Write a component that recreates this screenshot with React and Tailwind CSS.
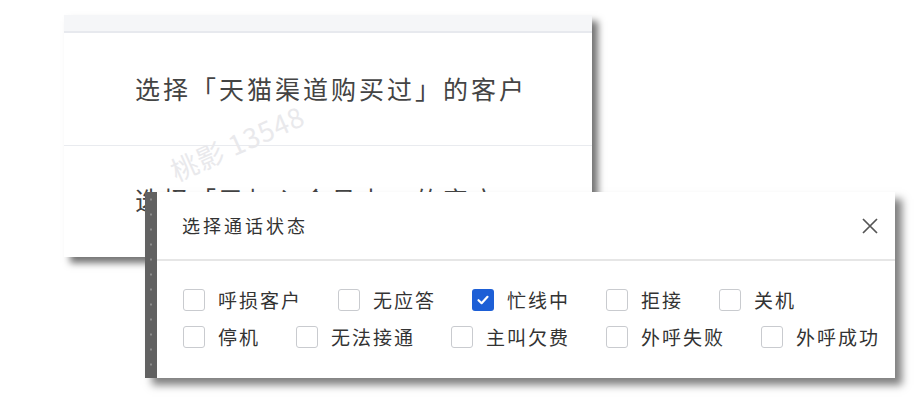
const options = [
  { label: "呼损客户", checked: false },
  { label: "无应答", checked: false },
  { label: "忙线中", checked: true },
  { label: "拒接", checked: false },
  { label: "关机", checked: false },
  { label: "停机", checked: false },
  { label: "无法接通", checked: false },
  { label: "主叫欠费", checked: false },
  { label: "外呼失败", checked: false },
  { label: "外呼成功", checked: false },
];

function Checkbox({ checked }) {
  if (checked) {
    return (
      <span className="w-[22px] h-[22px] rounded-[3px] bg-[#1d5fd6] flex items-center justify-center shrink-0">
        <svg width="14" height="14" viewBox="0 0 14 14" fill="none">
          <polyline points="2.5,7.2 5.6,10.2 11.5,3.8" stroke="#fff" strokeWidth="2.2" strokeLinecap="round" strokeLinejoin="round" />
        </svg>
      </span>
    );
  }
  return <span className="w-[22px] h-[22px] rounded-[3px] border border-[#c9cbcf] bg-white shrink-0" />;
}

export default function App() {
  return (
    <div
      className="relative w-[915px] h-[405px] bg-white overflow-hidden"
      style={{ fontFamily: '"Noto Sans CJK SC", "Noto Sans", sans-serif' }}
    >
      {/* background card */}
      <div className="absolute left-[64px] top-[15px] w-[528px] bg-white shadow-[6px_6px_7px_rgba(0,0,0,0.55)]">
        <div className="h-[18px] bg-[#f5f6f8] border-b-2 border-[#e7e9ee]" />
        <div className="h-[113px] flex items-center pl-[71px] border-b border-[#e9ebef] text-[25px] tracking-[3px] text-[#444]">
          选择「天猫渠道购买过」的客户
        </div>
        <div className="h-[111px] flex items-center pl-[71px] pb-[4px] text-[25px] tracking-[3px] text-[#444]">
          选择「已加入会员卡」的客户
        </div>
      </div>

      {/* watermark */}
      <div className="absolute left-[172px] top-[157px] h-[30px] leading-[30px] -rotate-[24deg] origin-left text-[27px] tracking-[1px] text-[#e9e9ec] whitespace-nowrap select-none">
        桃影 13548
      </div>

      {/* dialog */}
      <div className="absolute left-[145px] top-[192px] w-[750px] h-[186px] flex bg-white shadow-[7px_7px_8px_rgba(0,0,0,0.5)]">
        <div className="w-[12px] bg-[#616161] bg-[radial-gradient(circle,#8c8c8c_0.8px,transparent_1.4px)] bg-[length:12px_15px]" />
        <div className="flex-1 flex flex-col">
          <div className="h-[69px] flex items-center justify-between pl-[25px] pr-[16px] border-b-2 border-[#e6e6e6]">
            <span className="text-[18px] tracking-[3px] text-[#333]">选择通话状态</span>
            <svg width="18" height="18" viewBox="0 0 18 18" fill="none">
              <path d="M2 2 L16 16 M16 2 L2 16" stroke="#555" strokeWidth="1.7" />
            </svg>
          </div>
          <div className="pt-[27px] pl-[26px] w-[735px] flex flex-wrap gap-x-[36px] gap-y-[14px]">
            {options.map((o) => (
              <label key={o.label} className="flex items-center gap-[13px] h-[23px]">
                <Checkbox checked={o.checked} />
                <span className="text-[19px] tracking-[2px] text-[#333] leading-none whitespace-nowrap">{o.label}</span>
              </label>
            ))}
          </div>
        </div>
      </div>
    </div>
  );
}
